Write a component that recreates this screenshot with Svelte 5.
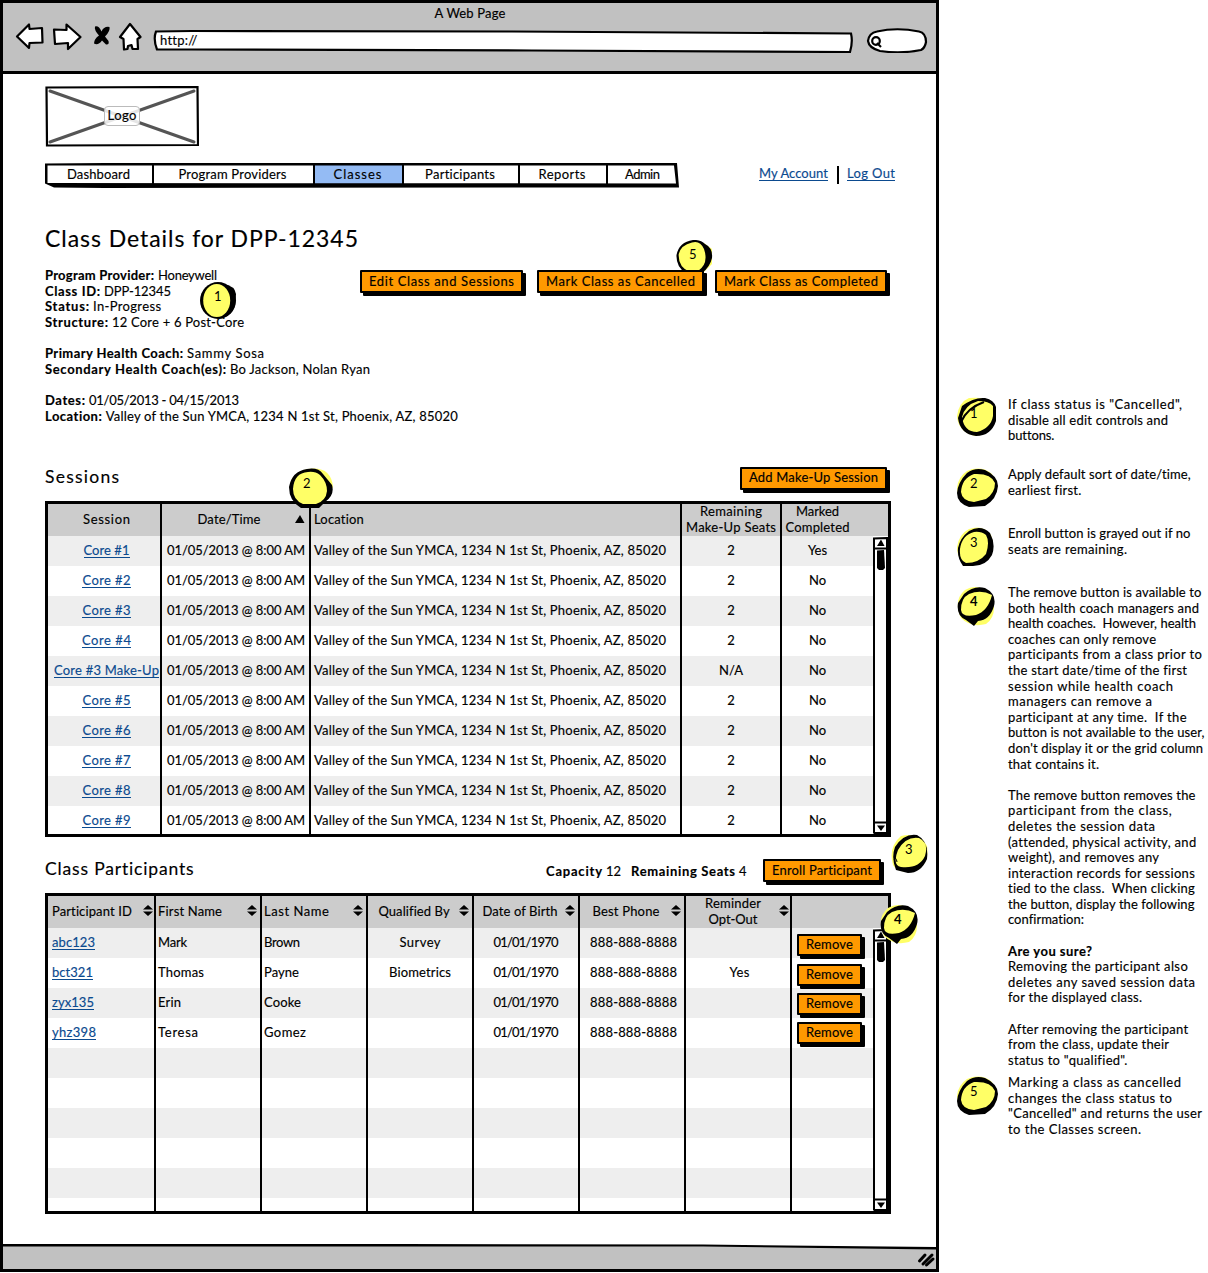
<script>
  // Spreads a line of text over the given width by adjusting its tracking.
  function fit(node, width) {
    if (!width) return;
    const natural = node.getBoundingClientRect().width;
    const gaps = Math.max(1, node.textContent.length - 1);
    const track = (width - natural) / gaps;
    node.style.letterSpacing = `${track}px`;
    node.style.marginRight = `${-track}px`;
  }

  const nav = [
    { label: 'Dashboard', w: 63, size: 107 },
    { label: 'Program Providers', w: 108, size: 161 },
    { label: 'Classes', w: 48, size: 89, active: true },
    { label: 'Participants', w: 70, size: 116 },
    { label: 'Reports', w: 47, size: 88 },
    { label: 'Admin', w: 35, size: 71 }
  ];

  const details = [
    ['Program Provider', 109, 'Honeywell', 59],
    ['Class ID', 55, 'DPP-12345', 67],
    ['Status', 44, 'In-Progress', 68],
    ['Structure', 63, '12 Core + 6 Post-Core', 132],
    null,
    ['Primary Health Coach', 138, 'Sammy Sosa', 77],
    ['Secondary Health Coach(es)', 181, 'Bo Jackson, Nolan Ryan', 140],
    null,
    ['Dates', 40, '01/05/2013 - 04/15/2013', 150],
    ['Location', 57, 'Valley of the Sun YMCA, 1234 N 1st St, Phoenix, AZ, 85020', 352]
  ];

  const sessions = [
    ['Core #1', 46, '2', 'Yes'],
    ['Core #2', 48, '2', 'No'],
    ['Core #3', 48, '2', 'No'],
    ['Core #4', 49, '2', 'No'],
    ['Core #3 Make-Up', 105, 'N/A', 'No'],
    ['Core #5', 48, '2', 'No'],
    ['Core #6', 48, '2', 'No'],
    ['Core #7', 48, '2', 'No'],
    ['Core #8', 48, '2', 'No'],
    ['Core #9', 48, '2', 'No']
  ];

  const columns = [
    { label: 'Participant ID', w: 80, left: true },
    { label: 'First Name', w: 64, left: true },
    { label: 'Last Name', w: 65, left: true },
    { label: 'Qualified By', w: 71 },
    { label: 'Date of Birth', w: 75 },
    { label: 'Best Phone', w: 67 }
  ];

  const people = [
    ['abc123', 43, 'Mark', 29, 'Brown', 36, 'Survey', 41, '', 6],
    ['bct321', 41, 'Thomas', 46, 'Payne', 35, 'Biometrics', 62, 'Yes', 6],
    ['zyx135', 42, 'Erin', 23, 'Cooke', 37, '', 0, '', 5],
    ['yhz398', 44, 'Teresa', 40, 'Gomez', 42, '', 0, '', 4]
  ];

  const notes = [
    { n: '1', size: 'n1', lines: [['If class status is "Cancelled",', 174], ['disable all edit controls and', 160], ['buttons.', 46]] },
    { n: '2', size: 'n2', lines: [['Apply default sort of date/time,', 183], ['earliest first.', 73]] },
    { n: '3', size: 'n3', lines: [['Enroll button is grayed out if no', 182], ['seats are remaining.', 119]] },
    {
      n: '4', size: 'n4', lines: [
        ['The remove button is available to', 193], ['both health coach managers and', 191],
        ['health coaches.  However, health', 188], ['coaches can only remove', 148],
        ['participants from a class prior to', 194], ['the start date/time of the first', 179],
        ['session while health coach', 165], ['managers can remove a', 144],
        ['participant at any time.  If the', 179], ['button is not available to the user,', 196],
        ["don't display it or the grid column", 195], ['that contains it.', 91], null,
        ['The remove button removes the', 187], ['participant from the class,', 164],
        ['deletes the session data', 147], ['(attended, physical activity, and', 188],
        ['weight), and removes any', 151], ['interaction records for sessions', 187],
        ['tied to the class.  When clicking', 187], ['the button, display the following', 186],
        ['confirmation:', 76], null, ['Are you sure?', 84, true],
        ['Removing the participant also', 180], ['deletes any saved session data', 187],
        ['for the displayed class.', 134], null, ['After removing the participant', 180],
        ['from the class, update their', 161], ['status to "qualified".', 119]
      ]
    },
    { n: '5', size: 'n5', lines: [['Marking a class as cancelled', 173], ['changes the class status to', 164], ['"Cancelled" and returns the user', 194], ['to the Classes screen.', 133]] }
  ];
</script>

{#snippet t(text, w, bold = false)}
  <span class="t" class:bold use:fit={w}>{text}</span>
{/snippet}

{#snippet sorter()}
  <svg class="sorter" width="10" height="11" viewBox="0 0 10 11"><path d="M5 0 10 4.6H0zM0 6.4h10L5 11z" /></svg>
{/snippet}

{#snippet scrollbar()}
  <div class="scroll">
    <svg width="16" height="34" viewBox="0 0 16 34">
      <path d="M1 34V1.500L14 1V34" fill="#fff" stroke="#000" stroke-width="2" />
      <path d="M1 11.500H15" stroke="#000" stroke-width="2" />
      <path d="M4 9 8 2.500 11.500 9z" />
      <path d="M4 13.500 11 13 12 31 10 33H6L4 31z" />
    </svg>
    <div class="track"></div>
    <svg width="16" height="13" viewBox="0 0 16 13">
      <path d="M1 0V12.500M14 0V12M1 1.500H15M1 12H15" fill="none" stroke="#000" stroke-width="2" />
      <path d="M4 4.500H12L8 10z" />
    </svg>
  </div>
{/snippet}

<!-- Sketched marker discs; each number has its own outline. -->
{#snippet disc(kind)}
  {#if kind === 'a1'}
    <svg width="37" height="38" viewBox="0 0 37 38"><ellipse cx="18" cy="18.500" rx="18" ry="18.500" /><path d="M24 2Q35 4 36 12L35 23Q33 32 23 36z" /><ellipse class="y" cx="16.700" cy="18.500" rx="13.500" ry="16.500" /></svg>
  {:else if kind === 'a5'}
    <svg width="37" height="33" viewBox="0 0 37 33"><path class="y" d="M28 3 36 9V24L27 33z" /><path d="M17 0Q25-.5 29 4Q37 8 36 18Q34 27 26 33H10Q0 27 .5 15Q3 2 17 0z" /><path class="y" d="M16 2.500Q24 0 28 9Q33 24 22 31L14 32Q2 27 2.700 14Q5 5 16 2.500z" /></svg>
  {:else if kind === 'a2'}
    <svg width="45" height="41" viewBox="0 0 45 41"><path class="y" d="M18 1Q42-3 44 19L34 34Q20 43 6 34Q-6 14 10 4z" /><path fill-rule="evenodd" d="M18 1Q29-1 34 6L43 17Q46 27 36 34L30 40H12Q0 33 0 19Q3 3 18 1zM19 4Q5 5 4 21Q4 32 14 36H27Q37 33 38 23Q38 14 31 7Q26 3 19 4z" /></svg>
  {:else if kind === 'b1'}
    <svg width="40" height="40" viewBox="0 0 40 40"><path class="y" d="M12 1Q35-1 38 10V24Q32 38 18 39Q1 35 0 19Q2 5 12 1z" /><path fill-rule="evenodd" d="M5 9Q17 0 28 1Q37 3 39 10V24Q34 39 19 39Q3 37 1 21zM5 20Q7 35 20 35Q34 31 36 19V9Q32 4 21 4Q8 8 5 20z" /><path d="M4 25Q10 11 27 5" fill="none" stroke="#000" stroke-width="2" /></svg>
  {:else if kind === 'b2'}
    <svg width="42" height="40" viewBox="0 0 42 40"><path class="y" d="M10 3Q24-3 35 6L40 20Q36 35 19 38Q1 37 0 20Q1 9 10 3z" /><path fill-rule="evenodd" d="M10 5Q18-1 28 2Q41 8 41 18Q40 31 28 38L12 39Q0 35 0 25Q1 14 10 5zM17 6Q5 10 4 24Q5 33 17 34L29 31Q38 25 38 15Q34 5 17 6z" /></svg>
  {:else if kind === 'b3'}
    <svg width="38" height="40" viewBox="0 0 38 40"><path class="y" d="M12 2Q26-3 34 8Q40 26 28 35L12 39Q0 34 0 20Q2 7 12 2z" /><path fill-rule="evenodd" d="M12 4Q24-3 33 6Q39 17 35 28Q29 39 16 39H6Q0 31 1 21Q3 11 12 4zM17 5Q5 8 3 22Q2 33 9 36Q22 36 29 27Q33 15 29 8Q24 4 17 5z" /></svg>
  {:else if kind === 'a3'}
    <svg width="37" height="40" viewBox="0 0 37 40"><path class="y" d="M10 2Q29-2 36 12Q39 31 23 37Q7 40 2 31Q-3 13 10 2z" /><path fill-rule="evenodd" d="M4 13Q13-1 26 1Q38 7 36 25Q30 39 17 39L5 36Q0 24 4 13zM7 16Q1 31 10 33Q28 35 34 22Q38 9 28 4Q15 2 7 16z" /><path d="M3 26Q5 22 6 28" fill="none" stroke="#000" /></svg>
  {:else if kind === 'b4'}
    <svg width="39" height="41" viewBox="0 0 39 41"><path class="y" d="M8 4Q21-4 35 9Q41 30 29 38Q14 42 4 32Q-4 14 8 4z" /><path fill-rule="evenodd" d="M7 8Q17-1 28 2Q40 8 37 20Q33 34 21 35L17 40L9 34Q-1 30 1 17zM12 8Q4 12 4 24Q5 32 19 29Q31 25 35 9Q24 3 12 8z" /></svg>
  {/if}
{/snippet}

<div class="page">
  <main class="window">
    <header class="chrome">
      <div class="title">{@render t('A Web Page', 71)}</div>
      <div class="tools">
        <svg width="128" height="32" viewBox="0 0 128 32">
          <g fill="#fff" stroke="#000" stroke-width="2.200" stroke-linejoin="round">
            <path d="M3 14.500 15 2.500 15.500 7 28 6 28.500 20.500 15.500 21 15 26z" />
            <path d="M40 7.500 52.500 8V2.500L66.500 15 54 27V21L41 22z" />
            <path d="M106 15 116 2 126.500 15 123.500 17 124 27H118.500L117.500 23 114 24 113.500 27 110 27.500 109.500 17z" />
          </g>
          <path d="M81 4.500Q85 3.500 87.500 9.500Q90 4 95.500 5Q96.500 9 91 14.500L94.500 19Q95.500 23 92 22.500L88 18.500Q84 24 80 21.500Q80 17 85 13.500Q80 8 81 4.500z" />
        </svg>
        <svg class="bar" width="702" height="26" viewBox="0 0 702 26">
          <path d="M4 4.500 40 4 360 4.500 699 6.500Q701 15 698 25L380 23.500 40 22.500 5 22.500Q1 12 4 4.500z" fill="#fff" stroke="#000" stroke-width="2.200" />
        </svg>
        <div class="http">{@render t('http://', 37)}</div>
        <svg width="62" height="26" viewBox="0 0 62 26">
          <path d="M11 4.500Q31 0 53 4.500Q60 6 60 15Q59 21 55 23Q35 27 14 24Q3 21 2 14Q3 6 11 4.500z" fill="#fff" stroke="#000" stroke-width="2.200" />
          <circle cx="10" cy="14" r="3.800" fill="none" stroke="#000" stroke-width="2.200" />
          <path d="m11 16 4 4" stroke="#000" stroke-width="2.200" />
        </svg>
      </div>
    </header>

    <section class="content">
      <div class="logo">
        <svg width="154" height="61" viewBox="0 0 154 61">
          <path d="M1.500 1.500 152.500 1 153 59 2 59.500z" fill="#fff" stroke="#000" stroke-width="2.200" />
          <path d="M5 5 149 56M5 56 149 5" stroke="#555" stroke-width="3" stroke-linecap="round" />
        </svg>
        <div class="logo-label">{@render t('Logo', 29)}</div>
      </div>

      <div class="navrow">
        <nav>
          {#each nav as item}
            <a class:active={item.active} style:width="{item.size}px">{@render t(item.label, item.w)}</a>
          {/each}
          <svg class="nav-edge" width="634" height="26" viewBox="0 0 634 26">
            <path fill-rule="evenodd" d="M0 .5 60 0 632 0 634 24.500H560L60 25 9 24.500 0 20.500zM2.500 2.500V20L631 20.500 629 2.500z" />
          </svg>
        </nav>
        <div class="account">
          <a class="link">{@render t('My Account', 69)}</a><i></i><a class="link">{@render t('Log Out', 48)}</a>
        </div>
      </div>

      <h1>{@render t('Class Details for DPP-12345', 313)}</h1>

      <div class="summary">
        <div class="facts">
          {#each details as d}
            <p>{#if d}{@render t(d[0] + ':', d[1], true)}<s></s>{@render t(d[2], d[3])}{/if}</p>
          {/each}
          <div class="mark m1">{@render disc('a1')}<b>1</b></div>
        </div>
        <div class="actions">
          <div class="mark m5">{@render disc('a5')}<b>5</b></div>
          <button class="w1">{@render t('Edit Class and Sessions', 145)}</button>
          <button class="w2">{@render t('Mark Class as Cancelled', 149)}</button>
          <button class="w3">{@render t('Mark Class as Completed', 154)}</button>
        </div>
      </div>

      <div class="bar-row sessions-bar">
        <h2>{@render t('Sessions', 74)}</h2>
        <button class="w4">{@render t('Add Make-Up Session', 129)}</button>
      </div>

      <div class="table sessions">
        <div class="row head">
          <div class="c s1">{@render t('Session', 47)}</div>
          <div class="c dt">{@render t('Date/Time', 63)}<svg class="asc" width="10" height="8" viewBox="0 0 10 8"><path d="M5 0 9.500 8H0z" /></svg></div>
          <div class="c l">{@render t('Location', 50)}</div>
          <div class="c two">{@render t('Remaining', 62)}{@render t('Make-Up Seats', 90)}</div>
          <div class="c two done">{@render t('Marked', 43)}{@render t('Completed', 64)}</div>
        </div>
        <div class="body">
          <div class="rows">
            {#each sessions as s}
              <div class="row">
                <div class="c s1"><a class="link">{@render t(s[0], s[1])}</a></div>
                <div class="c when">{@render t('01/05/2013 @ 8:00 AM', 138)}</div>
                <div class="c l">{@render t('Valley of the Sun YMCA, 1234 N 1st St, Phoenix, AZ, 85020', 352)}</div>
                <div class="c">{@render t(s[2], s[2] === '2' ? 0 : 24)}</div>
                <div class="c done">{@render t(s[3], 0)}</div>
              </div>
            {/each}
          </div>
          {@render scrollbar()}
        </div>
        <div class="mark m2">{@render disc('a2')}<b>2</b></div>
      </div>

      <div class="bar-row people-bar">
        <h2>{@render t('Class Participants', 149)}</h2>
        <div class="counts">{@render t('Capacity', 56, true)}{@render t('12', 0)}<em></em>{@render t('Remaining Seats', 104, true)}{@render t('4', 0)}</div>
        <button class="w5">{@render t('Enroll Participant', 100)}</button>
        <div class="mark m3">{@render disc('a3')}<b>3</b></div>
      </div>

      <div class="table people">
        <div class="row head">
          {#each columns as c}
            <div class="c sortable" class:l={c.left}>{@render t(c.label, c.w)}{@render sorter()}</div>
          {/each}
          <div class="c two sortable last">{@render t('Reminder', 56)}{@render t('Opt-Out', 49)}{@render sorter()}</div>
          <div class="c"></div>
        </div>
        <div class="body">
          <div class="rows">
            {#each people as p}
              <div class="row">
                <div class="c l"><a class="link">{@render t(p[0], p[1])}</a></div>
                <div class="c l">{@render t(p[2], p[3])}</div>
                <div class="c l">{@render t(p[4], p[5])}</div>
                <div class="c">{@render t(p[6], p[7])}</div>
                <div class="c">{@render t('01/01/1970', 65)}</div>
                <div class="c opt">{@render t('888-888-8888', 87)}</div>
                <div class="c opt">{@render t(p[8], p[8] ? 20 : 0)}</div>
                <div class="c remove" style:padding-top="{p[9]}px"><button>{@render t('Remove', 47)}</button></div>
              </div>
            {/each}
            {#each Array(6) as _}
              <div class="row">{#each Array(8) as _}<div class="c"></div>{/each}</div>
            {/each}
          </div>
          {@render scrollbar()}
        </div>
        <div class="mark m4">{@render disc('b4')}<b>4</b></div>
      </div>
    </section>

    <footer>
      <svg width="933" height="26" viewBox="0 0 933 26">
        <path d="M0 3H600Q800 3 933 5V26H0z" fill="#c1c1c1" />
        <path d="M0 1 400 1 700 1.500 933 4V6.500L700 3.500 0 3.500z" />
        <path d="M916.500 18 922 12M920 21 929 12M923.500 22 930 16" stroke="#000" stroke-width="3" stroke-linecap="round" />
      </svg>
    </footer>
  </main>

  <aside>
    {#each notes as note}
      <div class="note {note.size}">
        <div class="pin">{@render disc(note.n === '5' ? 'b2' : 'b' + note.n)}<b>{note.n}</b></div>
        <div class="words">
          {#each note.lines as l}
            <p>{#if l}{@render t(l[0], l[1], !!l[2])}{/if}</p>
          {/each}
        </div>
      </div>
    {/each}
  </aside>
</div>

<style>
  :global(body) { background: #fff; }
  * { box-sizing: border-box; }
  .page {
    display: flex; width: 1208px; height: 1273px; overflow: hidden;
    font: 13px/15.6px Lato, "Open Sans", sans-serif; color: #000;
  }
  p, h1, h2 { margin: 0; font-weight: 400; }
  svg { display: block; flex: none; }
  .t { display: inline-block; white-space: pre; -webkit-text-stroke: 0.15px currentColor; }
  .bold { font-weight: 700; }

  .window {
    display: flex; flex-direction: column; width: 939px; height: 1272px;
    border: 3px solid #000; flex: none;
  }
  .chrome { height: 71px; background: #c1c1c1; border-bottom: 3px solid #000; flex: none; }
  .title { display: flex; justify-content: center; padding-top: 3px; height: 18px; line-height: 15px; padding-left: 1px; }
  .tools { display: flex; align-items: center; height: 32px; margin-top: 1px; padding-left: 11px; position: relative; }
  .bar { margin-left: 10px; margin-top: 4px; }
  .tools > svg:last-child { margin-left: 12px; margin-top: 4px; }
  .http { position: absolute; left: 157px; top: 11px; }

  .content { padding-left: 42px; flex: 1; min-height: 0; }
  .logo { display: grid; width: 154px; margin-top: 12px; place-items: center; }
  .logo > * { grid-area: 1 / 1; }
  .logo-label {
    width: 36px; height: 20px; text-align: center; z-index: 1; margin-bottom: 1px;
    background: rgba(255, 255, 255, .85); border: 1px solid #bbb; border-radius: 4px; line-height: 17px;
  }
  .navrow { display: flex; margin-top: 16px; height: 26px; }
  nav { display: flex; width: 634px; position: relative; height: 26px; padding-left: 2px; }
  nav a {
    display: flex; align-items: center; justify-content: center; height: 22px;
    border-right: 2px solid #000; padding: 1px 2px 0 0; flex: none;
  }
  nav a:nth-last-child(2) { border: 0; }
  nav .active { background: #94bbf4; }
  .nav-edge { position: absolute; left: 0; top: 0; }
  .account { display: flex; margin-left: 80px; align-items: flex-start; padding-top: 3px; }
  .account i { width: 2px; height: 18px; background: #000; margin: 0 8px 0 9px; }
  .link { color: #0b4a8f; border-bottom: 1px solid #0b4a8f; display: inline-block; line-height: 14px; }
  .c .link { margin-bottom: 1px; }

  h1 { font-size: 23px; line-height: 28px; margin-top: 35px; height: 28px; }
  h2 { font-size: 17.5px; line-height: 22px; }
  .summary { display: flex; margin-top: 16px; height: 156px; }
  .facts { width: 315px; position: relative; flex: none; }
  .facts p { display: flex; height: 15.65px; white-space: nowrap; }
  .facts s { width: 4px; flex: none; }
  .actions { display: flex; position: relative; align-items: flex-start; padding-top: 2px; }
  button {
    display: flex; align-items: center; justify-content: center; padding: 0; height: 23px;
    border: 2px solid #000; background: #f90; font: inherit; color: #000; flex: none;
    box-shadow: 3px 3px 0 #000; position: relative; border-radius: 1px;
  }
  .w1 { width: 163px; }
  .w2 { width: 167px; margin-left: 14px; }
  .w3 { width: 172px; margin-left: 11px; }
  .w4 { width: 147px; margin-top: 2px; }
  .w5 { width: 118px; margin-top: 3px; }

  .bar-row { display: flex; align-items: center; position: relative; }
  .sessions-bar { margin-top: 41px; height: 24px; justify-content: space-between; width: 842px; }
  .people-bar { margin-top: 20px; height: 24px; width: 836px; }
  .people-bar h2 { width: 501px; }
  .counts { display: flex; width: 217px; gap: 4px; padding-top: 5px; }
  .counts em { width: 2px; }

  .table { width: 846px; border: 3px solid #000; position: relative; display: flex; flex-direction: column; }
  .sessions { margin-top: 12px; height: 336px; }
  .people { margin-top: 12px; height: 321px; }
  .row { display: grid; height: 30px; }
  .sessions .row { grid-template-columns: 114px 149px 371px 100px 91px; }
  .people .row { grid-template-columns: 108px repeat(6, 106px) 81px; }
  .row.head { background: #ccc; flex: none; height: 32px; }
  .c { display: flex; align-items: center; justify-content: center; border-right: 2px solid #000; min-width: 0; white-space: nowrap; position: relative; }
  .c:last-child { border-right: 0; }
  .l { justify-content: flex-start; padding-left: 2px; }
  .sessions .l { padding-left: 3px; }
  .people .row .l:first-child { padding-left: 4px; }
  .s1 { padding-left: 5px; }
  .when { padding-left: 1px; }
  .done { padding-right: 20px; }
  .opt { padding-left: 3px; }
  .two { flex-direction: column; }
  .dt { padding-right: 13px; }
  .asc { position: absolute; right: 4px; top: 11px; }
  .people .sortable:not(.l) { padding-right: 12px; }
  .people .sortable.last { padding-right: 10px; }
  .sorter { position: absolute; right: 3px; top: 9px; }
  .sortable:first-child .sorter { right: 1px; }
  .last .sorter { right: 1px; }
  .body { display: flex; flex: 1; min-height: 0; overflow: hidden; }
  .rows { width: 825px; overflow: hidden; flex: none; }
  .rows .row:nth-child(odd) { background: #eee; }
  .remove { justify-content: flex-start; align-items: flex-start; padding-left: 5px; }
  .remove button { width: 65px; height: 22px; z-index: 1; }
  .scroll { width: 16px; display: flex; flex-direction: column; height: 100%; background: #fff; padding-top: 1px; }
  .track { flex: 1; width: 15px; border-left: 2px solid #000; border-right: 2px solid #000; }

  .mark { position: absolute; z-index: 2; }
  .mark b, .pin b { position: absolute; font-weight: 400; line-height: 14px; }
  .y { fill: #ff6; }
  .m1 { left: 155px; top: 14px; }
  .m1 b { left: 14px; top: 7px; }
  .m5 { left: 316px; top: -28px; z-index: 0; }
  .m5 b { left: 13px; top: 7px; }
  .m2 { left: 241px; top: -36px; }
  .m2 b { left: 14px; top: 8px; }
  .m3 { left: 846px; top: -23px; }
  .m3 b { left: 14px; top: 8px; }
  .m4 { left: 832px; top: 8px; }
  .m4 b { left: 14px; top: 8px; font-weight: 700; }

  footer { height: 26px; flex: none; }

  aside { width: 251px; margin-left: 18px; padding-top: 397px; }
  .note { display: flex; }
  .note p { height: 15.6px; white-space: nowrap; }
  .pin { position: relative; width: 51px; padding-top: 1px; }
  .pin b { left: 13px; top: 9px; }
  .n4 .pin b { font-weight: 700; }
  .n1 .pin { padding-top: 0; }
  .n1 { height: 70px; }
  .n2 { height: 59px; }
  .n3 { height: 59px; }
  .n4 { height: 490px; }
</style>
